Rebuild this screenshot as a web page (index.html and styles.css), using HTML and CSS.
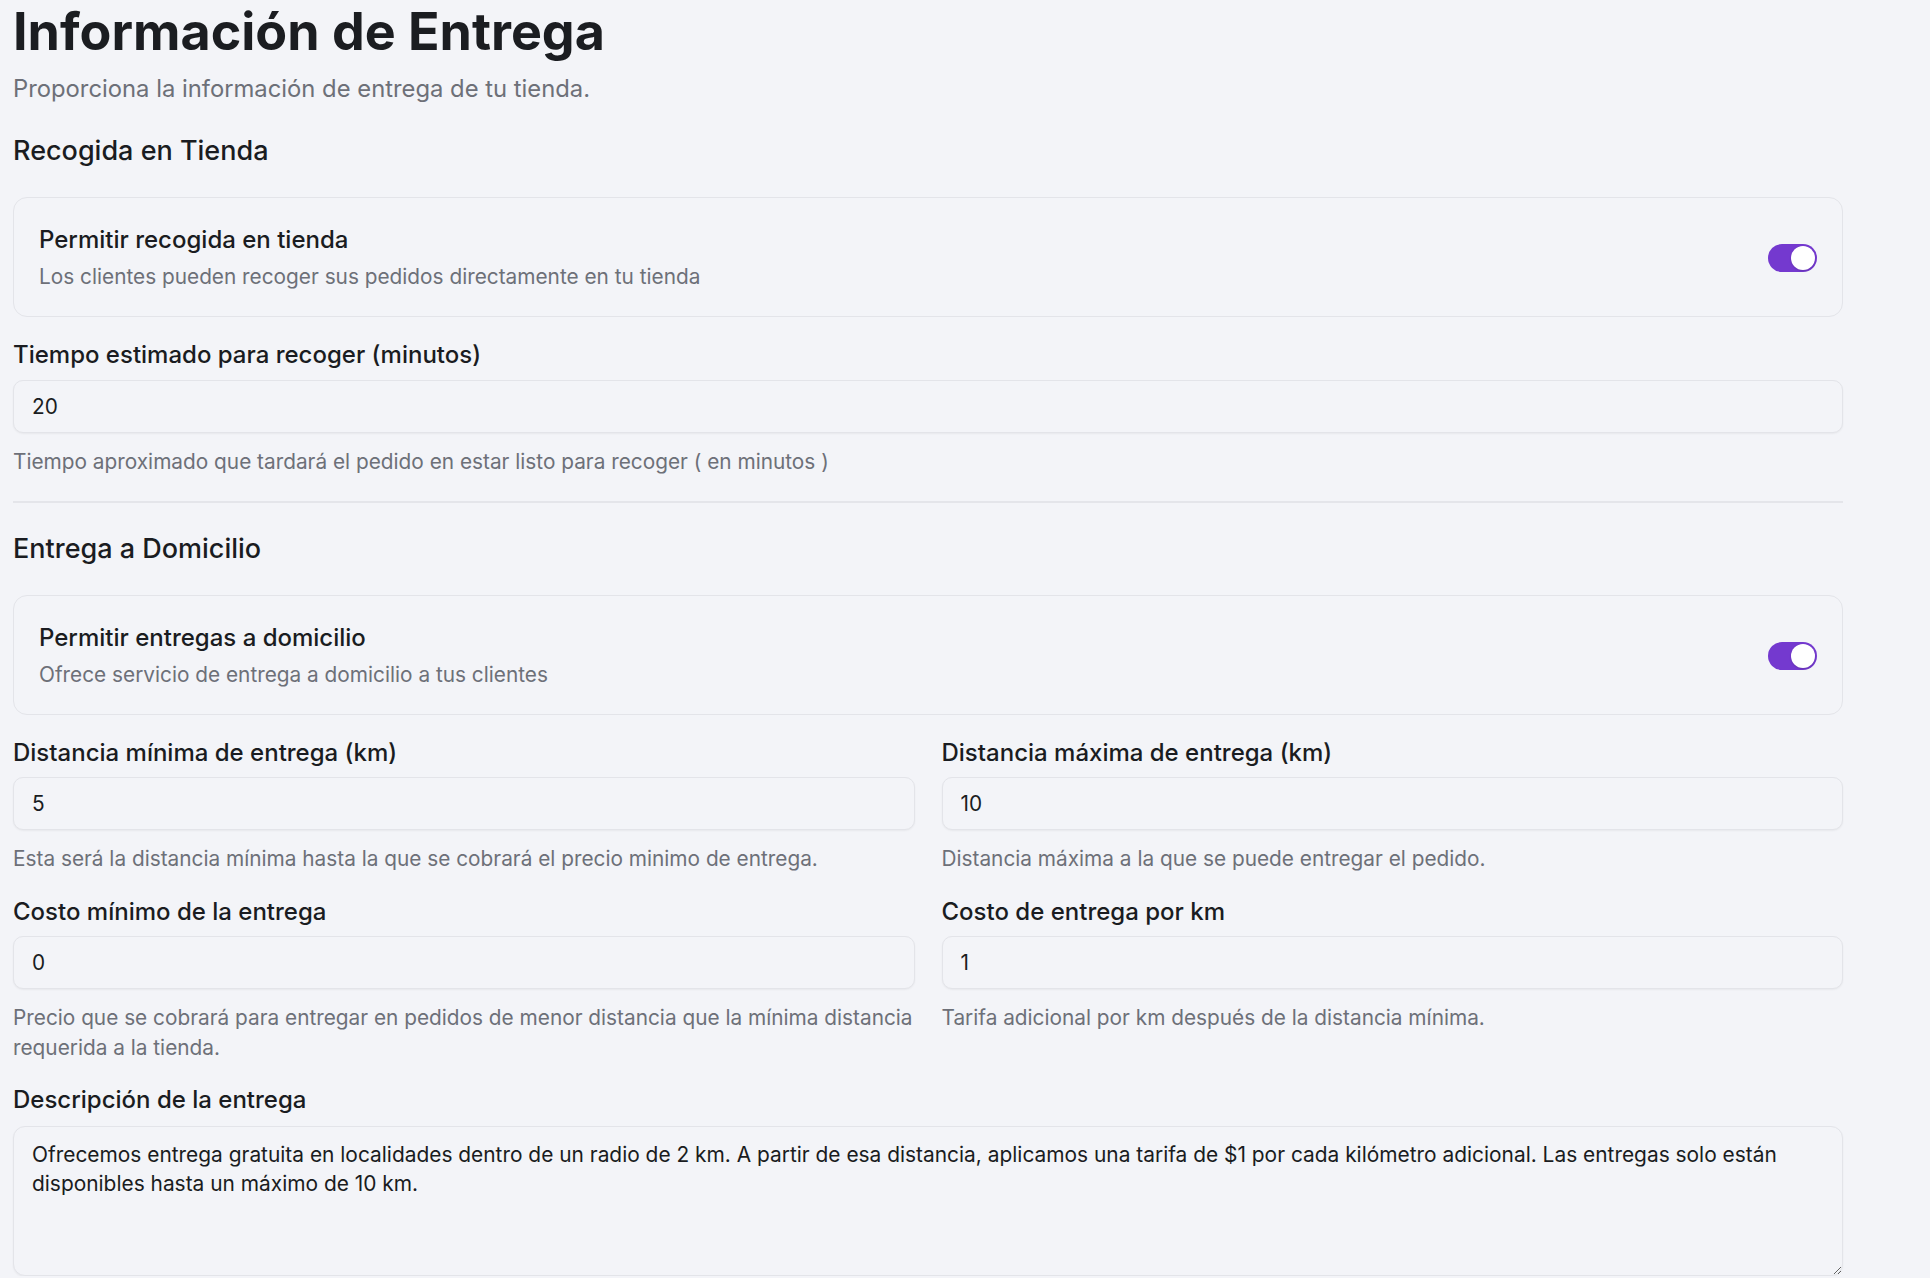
FILE: index.html
```html
<!DOCTYPE html>
<html lang="es">
<head>
  <meta charset="UTF-8">
  <title>Información de Entrega</title>
  <link rel="stylesheet" href="styles.css">
</head>
<body>
  <main class="delivery">
    <h1 class="title">Información de Entrega</h1>
    <p class="subtitle">Proporciona la información de entrega de tu tienda.</p>

    <!-- Recogida -->
    <h2 class="group-title">Recogida en Tienda</h2>
    <div class="switch-card">
      <div class="switch-text">
        <div class="switch-label">Permitir recogida en tienda</div>
        <div class="switch-desc">Los clientes pueden recoger sus pedidos directamente en tu tienda</div>
      </div>
      <label class="switch">
        <input type="checkbox" checked>
        <span class="slider"></span>
      </label>
    </div>

    <div class="field field-single">
      <label class="field-label" for="pickup-time">Tiempo estimado para recoger (minutos)</label>
      <input class="input" id="pickup-time" type="text" value="20">
      <p class="hint">Tiempo aproximado que tardará el pedido en estar listo para recoger ( en minutos )</p>
    </div>

    <hr class="divider">

    <!-- Domicilio -->
    <h2 class="group-title">Entrega a Domicilio</h2>
    <div class="switch-card">
      <div class="switch-text">
        <div class="switch-label">Permitir entregas a domicilio</div>
        <div class="switch-desc">Ofrece servicio de entrega a domicilio a tus clientes</div>
      </div>
      <label class="switch">
        <input type="checkbox" checked>
        <span class="slider"></span>
      </label>
    </div>

    <div class="field-grid">
      <div class="field">
        <label class="field-label" for="min-dist">Distancia mínima de entrega (km)</label>
        <input class="input" id="min-dist" type="text" value="5">
        <p class="hint">Esta será la distancia mínima hasta la que se cobrará el precio minimo de entrega.</p>
      </div>
      <div class="field">
        <label class="field-label" for="max-dist">Distancia máxima de entrega (km)</label>
        <input class="input" id="max-dist" type="text" value="10">
        <p class="hint">Distancia máxima a la que se puede entregar el pedido.</p>
      </div>
      <div class="field">
        <label class="field-label" for="min-cost">Costo mínimo de la entrega</label>
        <input class="input" id="min-cost" type="text" value="0">
        <p class="hint">Precio que se cobrará para entregar en pedidos de menor distancia que la mínima distancia requerida a la tienda.</p>
      </div>
      <div class="field">
        <label class="field-label" for="km-cost">Costo de entrega por km</label>
        <input class="input" id="km-cost" type="text" value="1">
        <p class="hint">Tarifa adicional por km después de la distancia mínima.</p>
      </div>
    </div>

    <div class="field field-desc">
      <label class="field-label" for="desc">Descripción de la entrega</label>
      <textarea class="textarea" id="desc">Ofrecemos entrega gratuita en localidades dentro de un radio de 2 km. A partir de esa distancia, aplicamos una tarifa de $1 por cada kilómetro adicional. Las entregas solo están disponibles hasta un máximo de 10 km.</textarea>
    </div>
  </main>
</body>
</html>
```

FILE: styles.css
```css
:root {
  --bg: #f3f4f8;
  --border: #e3e4e9;
  --text: #1a1c21;
  --muted: #6d7078;
  --accent: #7439cf;
}

body {
  margin: 0;
  background: var(--bg);
  color: var(--text);
  font-family: "Inter", "Noto Sans", sans-serif;
}

.delivery {
  width: 1830px;
  padding-left: 13px;
}

.title {
  margin: 0;
  font-size: 52px;
  line-height: 63px;
  font-weight: 700;
  color: #1b1d21;
}

.subtitle {
  margin: 10px 0 0;
  font-size: 23.8px;
  line-height: 32px;
  color: var(--muted);
}

.group-title {
  margin: 28px 0 0;
  font-size: 27px;
  line-height: 36px;
  font-weight: 500;
}

.switch-card {
  margin-top: 28px;
  display: flex;
  align-items: center;
  justify-content: space-between;
  padding: 26px 25px 24px;
  border: 1px solid var(--border);
  border-radius: 14px;
}

.switch-label {
  font-size: 24px;
  line-height: 32px;
  font-weight: 500;
}

.switch-desc {
  margin-top: 6px;
  font-size: 20.8px;
  line-height: 30px;
  color: var(--muted);
}

.switch {
  position: relative;
  width: 49px;
  height: 28px;
  flex-shrink: 0;
}

.switch input {
  display: none;
}

.slider {
  position: absolute;
  inset: 0;
  background: #d6d7dd;
  border-radius: 14px;
}

.slider::after {
  content: "";
  position: absolute;
  top: 2px;
  left: 2px;
  width: 24px;
  height: 24px;
  border-radius: 50%;
  background: #fff;
  box-shadow: 0 1px 2px rgba(0,0,0,0.15);
}

.switch input:checked + .slider {
  background: var(--accent);
}

.switch input:checked + .slider::after {
  left: 23px;
}

.field {
  display: flex;
  flex-direction: column;
}

.field-single {
  margin-top: 22px;
}

.field-label {
  font-size: 24px;
  line-height: 32px;
  font-weight: 500;
}

.input {
  margin-top: 9px;
  height: 53px;
  box-sizing: border-box;
  padding: 0 18px;
  border: 1px solid var(--border);
  border-radius: 10px;
  background: var(--bg);
  box-shadow: 0 1px 2px rgba(0,0,0,0.05);
  font-family: inherit;
  font-size: 20.8px;
  color: var(--text);
  outline: none;
}

.hint {
  margin: 14px 0 0;
  font-size: 20.8px;
  line-height: 30px;
  color: var(--muted);
}

.divider {
  margin: 24px 0 0;
  border: 0;
  height: 2px;
  background: #e4e5ea;
}

.field-grid {
  margin-top: 22px;
  display: grid;
  grid-template-columns: 1fr 1fr;
  column-gap: 27px;
  row-gap: 22px;
}

.field-grid .input {
  margin-top: 8px;
}

.field-desc {
  margin-top: 21px;
}

.textarea {
  margin-top: 10px;
  height: 150px;
  box-sizing: border-box;
  padding: 13px 18px;
  border: 1px solid var(--border);
  border-radius: 12px;
  background: var(--bg);
  box-shadow: 0 1px 2px rgba(0,0,0,0.05);
  font-family: inherit;
  font-size: 20.9px;
  line-height: 29px;
  color: var(--text);
  outline: none;
}
```
